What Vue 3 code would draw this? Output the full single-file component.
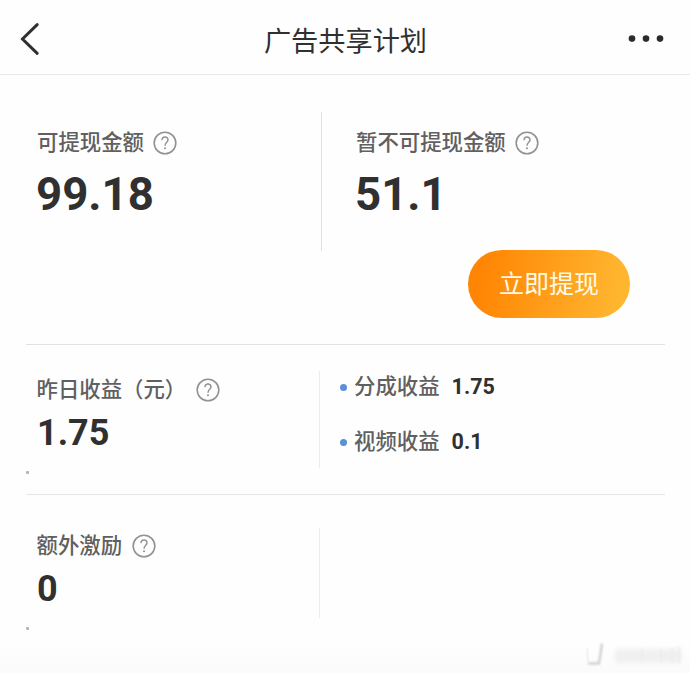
<script setup>
import { h } from 'vue'

const balances = [
  { label: '可提现金额', value: '99.18' },
  { label: '暂不可提现金额', value: '51.1' },
]
const breakdown = [
  { label: '分成收益', value: '1.75' },
  { label: '视频收益', value: '0.1' },
]

const HelpIcon = () =>
  h('svg', { width: 24, height: 24, viewBox: '0 0 24 24', fill: 'none', stroke: '#929292' }, [
    h('circle', { cx: 12, cy: 12, r: 10.8, 'stroke-width': 1.6 }),
    h('path', {
      d: 'M9 9.3C9 7.1 10.2 6 12 6s3 1.2 3 2.9c0 2.3-3 2.7-3 5.8',
      'stroke-width': 1.4,
    }),
    h('circle', { cx: 12, cy: 17.3, r: 1, fill: '#929292', stroke: 'none' }),
  ])
</script>

<template>
  <div class="page">
    <header class="header">
      <svg class="back" width="20" height="34" viewBox="0 0 20 34">
        <path d="M17.2 2.6 2.5 17l14.7 14.3" />
      </svg>
      <h1 class="title">广告共享计划</h1>
      <svg class="more" width="36" height="8" viewBox="0 0 36 8">
        <circle cx="4" cy="3.6" r="3.3" />
        <circle cx="18" cy="3.6" r="3.3" />
        <circle cx="32" cy="3.6" r="3.3" />
      </svg>
    </header>

    <main class="content">
      <section class="balance">
        <div class="balance-row">
          <div v-for="b in balances" :key="b.label" class="balance-cell">
            <div class="label"><span>{{ b.label }}</span><HelpIcon class="help" /></div>
            <div class="amount large">{{ b.value }}</div>
          </div>
        </div>
        <button class="withdraw">立即提现</button>
      </section>

      <section class="row yesterday">
        <div class="cell">
          <div class="label"><span>昨日收益（元）</span><HelpIcon class="help" /></div>
          <div class="amount">1.75</div>
          <i class="speck"></i>
        </div>
        <ul class="breakdown">
          <li v-for="item in breakdown" :key="item.label">
            <i class="bullet"></i>
            <span class="label"><span>{{ item.label }}</span></span>
            <b>{{ item.value }}</b>
          </li>
        </ul>
      </section>

      <section class="row extra">
        <div class="cell">
          <div class="label"><span>额外激励</span><HelpIcon class="help" /></div>
          <div class="amount">0</div>
          <i class="speck"></i>
        </div>
      </section>
    </main>

    <div class="bottom-shade"></div>
    <svg class="watermark" width="110" height="34" viewBox="0 0 110 34">
      <defs>
        <filter id="soft" x="-20%" y="-20%" width="140%" height="140%">
          <feGaussianBlur stdDeviation="0.8" />
        </filter>
        <filter id="softer" x="-20%" y="-40%" width="140%" height="180%">
          <feGaussianBlur stdDeviation="2.4" />
        </filter>
      </defs>
      <path class="side" filter="url(#soft)" d="M7 9l1 14" />
      <path class="hook" filter="url(#soft)" d="M8 24.500h11l3-20" />
      <rect class="smear" filter="url(#softer)" x="35" y="10" width="66" height="14" />
      <path class="ticks" filter="url(#soft)" d="M62 10v12M81 10v13M92 9v14M99 8v16" />
    </svg>
  </div>
</template>

<style>
body {
  margin: 0;
  background: #fefefe;
}
</style>

<style scoped>
.page {
  position: relative;
  width: 690px;
  height: 673px;
  overflow: hidden;
  background: #fefefe;
  color: #303030;
  font-family: Roboto, "Noto Sans CJK SC", sans-serif;
}
.header {
  display: flex;
  align-items: center;
  justify-content: space-between;
  box-sizing: border-box;
  height: 75px;
  padding: 3px 26px 0 20px;
  border-bottom: 1px solid #e9e9e9;
}
.back {
  fill: none;
  stroke: #303030;
  stroke-width: 3;
  stroke-linecap: round;
}
.more {
  fill: #2b2b2b;
}
.title {
  margin: 7px 0 0 15px;
  padding-left: 8px;
  font-size: 27.2px;
  line-height: 40px;
  font-weight: 400;
}
.content {
  padding: 0 25px 0 26px;
}
.balance {
  display: flex;
  flex-direction: column;
  box-sizing: border-box;
  height: 270px;
  padding-top: 37px;
  border-bottom: 1px solid #e2e2e2;
}
.balance-row {
  display: flex;
  height: 139px;
}
.balance-cell {
  box-sizing: border-box;
  width: 295px;
  padding: 15px 0 0 11px;
}
.balance-cell + .balance-cell {
  width: 344px;
  padding-left: 34px;
  border-left: 1px solid #e0e0e0;
}
.label {
  display: flex;
  align-items: center;
  height: 30px;
  color: #606060;
  font-size: 21.4px;
  line-height: 30px;
  font-weight: 500;
  white-space: nowrap;
}
.label span {
  padding-top: 2px;
}
.help {
  flex: none;
  margin: 1px 0 0 9.5px;
}
.amount {
  height: 44px;
  font-size: 36px;
  line-height: 44px;
  font-weight: 700;
}
.amount.large {
  height: 56px;
  margin: 10px 0 0 -1px;
  font-size: 45.6px;
  line-height: 56px;
}
.withdraw {
  align-self: flex-end;
  width: 162px;
  height: 68px;
  margin: -1px 35px 0 0;
  padding: 2px 0 0;
  border: 0;
  border-radius: 34px;
  background: linear-gradient(100deg, #ff8604 10%, #ffb62f 92%);
  color: #fffbe8;
  font-family: inherit;
  font-size: 25px;
  line-height: 66px;
}
.row {
  display: flex;
  box-sizing: border-box;
}
.cell {
  display: flex;
  flex-direction: column;
  box-sizing: border-box;
  width: 294px;
  padding-left: 11px;
  border-right: 1px solid #ececec;
}
.cell .label {
  margin-left: -0.5px;
}
.cell .amount {
  margin-top: 7px;
}
.speck {
  width: 3px;
  height: 3px;
  margin: auto 0 0 -11px;
  border-radius: 1px;
  background: #b4b4b4;
}
.yesterday {
  height: 150px;
  padding: 26px 0 26px;
  border-bottom: 1px solid #e5e5e5;
}
.yesterday .cell {
  padding-top: 3px;
}
.yesterday .cell .help {
  margin-left: 10px;
}
.yesterday .speck {
  margin-bottom: -6px;
}
.extra .speck {
  margin-bottom: -12px;
}
.breakdown {
  display: flex;
  flex-direction: column;
  gap: 25px;
  margin: 0;
  padding: 0 0 0 20px;
  list-style: none;
}
.breakdown li {
  display: flex;
  align-items: center;
  height: 30px;
}
.bullet {
  width: 7px;
  height: 7px;
  margin: 2px 7px 0 0;
  border-radius: 50%;
  background: #5b8fd9;
}
.breakdown b {
  margin-left: 12px;
  padding-top: 1px;
  font-size: 21.5px;
  line-height: 30px;
}
.extra {
  height: 123px;
  padding-top: 33px;
}
.extra .cell {
  padding-top: 2px;
}
.bottom-shade {
  height: 55px;
  background: linear-gradient(#fefefe 50%, #fbfbfb);
}
.watermark {
  position: absolute;
  right: 0;
  bottom: 0;
  fill: none;
}
.side {
  stroke: #ececec;
  stroke-width: 2;
}
.hook {
  stroke: #c8c8c8;
  stroke-width: 2;
}
.smear {
  fill: #f0f0f0;
}
.ticks {
  stroke: #ececec;
  stroke-width: 2;
}
</style>
